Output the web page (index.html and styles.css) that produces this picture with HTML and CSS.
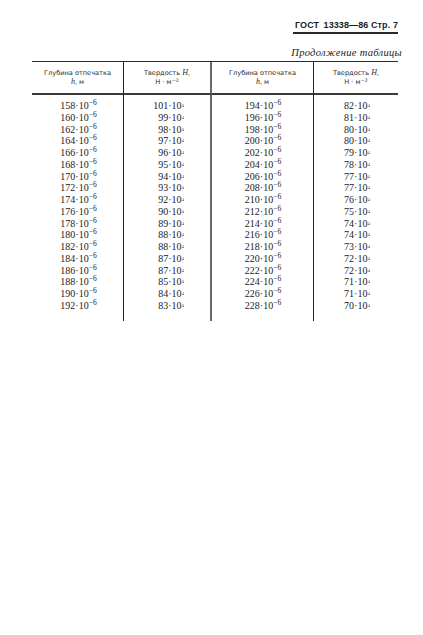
FILE: index.html
```html
<!DOCTYPE html>
<html lang="ru">
<head>
<meta charset="utf-8">
<title>ГОСТ 13338—86 Стр. 7</title>
<link rel="stylesheet" href="styles.css">
</head>
<body>
<div class="page">
  <div class="running-head"><span class="gost">ГОСТ</span><span>13338—86 Стр. 7</span></div>
  <div class="caption">Продолжение таблицы</div>
  <div class="table">
    <div class="th c1"><div>Глубина отпечатка</div><div><i>h</i>, м</div></div>
    <div class="th c2"><div>Твердость <i>H</i>,</div><div>Н · м<span class="hs">−2</span></div></div>
    <div class="th c3"><div>Глубина отпечатка</div><div><i>h</i>, м</div></div>
    <div class="th c4"><div>Твердость <i>H</i>,</div><div>Н · м<span class="hs">−2</span></div></div>

    <div class="td c1">
      <div>158·10<sup class="e">−6</sup></div>
      <div>160·10<sup class="e">−6</sup></div>
      <div>162·10<sup class="e">−6</sup></div>
      <div>164·10<sup class="e">−6</sup></div>
      <div>166·10<sup class="e">−6</sup></div>
      <div>168·10<sup class="e">−6</sup></div>
      <div>170·10<sup class="e">−6</sup></div>
      <div>172·10<sup class="e">−6</sup></div>
      <div>174·10<sup class="e">−6</sup></div>
      <div>176·10<sup class="e">−6</sup></div>
      <div>178·10<sup class="e">−6</sup></div>
      <div>180·10<sup class="e">−6</sup></div>
      <div>182·10<sup class="e">−6</sup></div>
      <div>184·10<sup class="e">−6</sup></div>
      <div>186·10<sup class="e">−6</sup></div>
      <div>188·10<sup class="e">−6</sup></div>
      <div>190·10<sup class="e">−6</sup></div>
      <div>192·10<sup class="e">−6</sup></div>
    </div>
    <div class="td c2">
      <div>101·10<sup class="p">4</sup></div>
      <div>99·10<sup class="p">4</sup></div>
      <div>98·10<sup class="p">4</sup></div>
      <div>97·10<sup class="p">4</sup></div>
      <div>96·10<sup class="p">4</sup></div>
      <div>95·10<sup class="p">4</sup></div>
      <div>94·10<sup class="p">4</sup></div>
      <div>93·10<sup class="p">4</sup></div>
      <div>92·10<sup class="p">4</sup></div>
      <div>90·10<sup class="p">4</sup></div>
      <div>89·10<sup class="p">4</sup></div>
      <div>88·10<sup class="p">4</sup></div>
      <div>88·10<sup class="p">4</sup></div>
      <div>87·10<sup class="p">4</sup></div>
      <div>87·10<sup class="p">4</sup></div>
      <div>85·10<sup class="p">4</sup></div>
      <div>84·10<sup class="p">4</sup></div>
      <div>83·10<sup class="p">4</sup></div>
    </div>
    <div class="td c3">
      <div>194·10<sup class="e">−6</sup></div>
      <div>196·10<sup class="e">−6</sup></div>
      <div>198·10<sup class="e">−6</sup></div>
      <div>200·10<sup class="e">−6</sup></div>
      <div>202·10<sup class="e">−6</sup></div>
      <div>204·10<sup class="e">−6</sup></div>
      <div>206·10<sup class="e">−6</sup></div>
      <div>208·10<sup class="e">−6</sup></div>
      <div>210·10<sup class="e">−6</sup></div>
      <div>212·10<sup class="e">−6</sup></div>
      <div>214·10<sup class="e">−6</sup></div>
      <div>216·10<sup class="e">−6</sup></div>
      <div>218·10<sup class="e">−6</sup></div>
      <div>220·10<sup class="e">−6</sup></div>
      <div>222·10<sup class="e">−6</sup></div>
      <div>224·10<sup class="e">−6</sup></div>
      <div>226·10<sup class="e">−6</sup></div>
      <div>228·10<sup class="e">−6</sup></div>
    </div>
    <div class="td c4">
      <div>82·10<sup class="p">4</sup></div>
      <div>81·10<sup class="p">4</sup></div>
      <div>80·10<sup class="p">4</sup></div>
      <div>80·10<sup class="p">4</sup></div>
      <div>79·10<sup class="p">4</sup></div>
      <div>78·10<sup class="p">4</sup></div>
      <div>77·10<sup class="p">4</sup></div>
      <div>77·10<sup class="p">4</sup></div>
      <div>76·10<sup class="p">4</sup></div>
      <div>75·10<sup class="p">4</sup></div>
      <div>74·10<sup class="p">4</sup></div>
      <div>74·10<sup class="p">4</sup></div>
      <div>73·10<sup class="p">4</sup></div>
      <div>72·10<sup class="p">4</sup></div>
      <div>72·10<sup class="p">4</sup></div>
      <div>71·10<sup class="p">4</sup></div>
      <div>71·10<sup class="p">4</sup></div>
      <div>70·10<sup class="p">4</sup></div>
    </div>
  </div>
</div>
</body>
</html>
```
FILE: styles.css
```css
html, body {
  margin: 0;
  padding: 0;
  background: #ffffff;
}

body {
  width: 423px;
  height: 635px;
  overflow: hidden;
  color: #1c1c1c;
  font-family: "Liberation Serif", "Times New Roman", serif;
}

.page {
  padding-top: 19px;
}

.running-head {
  display: flex;
  justify-content: space-between;
  width: 105px;
  margin-left: 293px;
  padding-bottom: 1px;
  border-bottom: 2px solid #2a2a2a;
  font-family: "Liberation Sans", Arial, sans-serif;
  font-weight: bold;
  font-size: 9px;
  line-height: 12px;
  letter-spacing: 0.1px;
}

.running-head .gost {
  padding-left: 2px;
}

.caption {
  margin-top: 13px;
  width: 402px;
  text-align: right;
  font-style: italic;
  font-size: 10.5px;
  line-height: 12px;
  letter-spacing: 0.3px;
}

.table {
  display: grid;
  grid-template-columns: 92px 88px 102px 84px;
  margin-top: 2px;
  margin-left: 32px;
  width: 366px;
  border-top: 1px solid #2b2b2b;
}

.th {
  box-sizing: border-box;
  height: 33px;
  padding-top: 7px;
  border-bottom: 2px solid #3a3a3a;
  font-family: "DejaVu Sans", sans-serif;
  font-size: 6.6px;
  line-height: 8.5px;
  text-align: center;
  color: #2a2a2a;
}

.th i {
  font-family: "Liberation Serif", serif;
  font-size: 8px;
  line-height: 8px;
}

.th .hs {
  display: inline-block;
  font-size: 4.6px;
  line-height: 5px;
  vertical-align: top;
  margin-left: 0.5px;
}

.c1, .c3 {
  border-right: 1px solid #222;
}

.c2 {
  border-right: 2px solid #6a6a6a;
}

.td {
  box-sizing: border-box;
  padding-top: 5px;
  padding-bottom: 9px;
  font-size: 10px;
  line-height: 11.76px;
}

.td.c1 {
  padding-left: 2px;
  text-align: center;
}

.td.c2 {
  text-align: right;
  padding-right: 26px;
}

.td.c3 {
  padding-left: 1px;
  text-align: center;
}

.td.c4 {
  text-align: center;
  padding-left: 2px;
}

sup {
  line-height: 0;
}

sup.e {
  font-size: 7.5px;
  vertical-align: 4px;
}

sup.p {
  font-size: 5px;
  vertical-align: 2px;
  color: #555;
}
```
